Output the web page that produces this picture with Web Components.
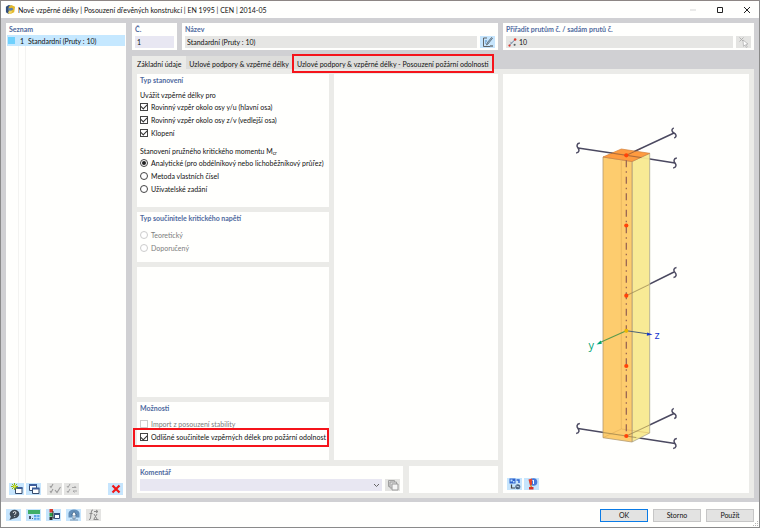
<!DOCTYPE html>
<html lang="cs">
<head>
<meta charset="utf-8">
<title>Nové vzpěrné délky</title>
<style>
html, body { height: 100%; }
body { margin: 0; background: #fff; font: 7px/10px Lato, "Open Sans", sans-serif; color: #111; }
</style>
</head>
<body>
<length-dialog></length-dialog>

<script>
const ICONS = {
  app: '<path d="M1 3 4 1l3 1v6L4 11 1 9z" fill="#33507c"/><path d="M4 3 7 1l4 2-1 6-4 2-2-2z" fill="#e3b92c"/><path d="M3 5l5-1 1 2-4 2z" fill="#5a7fae"/><path d="M5 7l3 1-2 3-3-1z" fill="#f0d560"/>',
  edit: '<path d="M5 2H1.500v8.500H8" fill="none" stroke="#555" stroke-width=".9"/><path d="M3 5h2M3 7h1" stroke="#4a86c0"/><path d="M4.500 9 5 7l4.500-5.500 1 .8L6 8z" fill="#8fb7d6" stroke="#444" stroke-width=".6"/><path d="M8 10h3" stroke="#444"/>',
  member: '<path d="M2 9.500 9 2.500" stroke="#5a7fa8" stroke-width="1.300"/><path d="M3 5l2 2M7 9l2 1" stroke="#778"/><circle cx="2" cy="10" r="1.500" fill="#e03a2f"/><circle cx="9.500" cy="2" r="1.700" fill="#e03a2f"/><circle cx="9" cy="9" r="1.200" fill="#566"/>',
  pick: '<path d="M1.500 1.500l4 4M5.500 1.500l-4 4" stroke="#aaa" stroke-width=".9"/><path d="M5 4l5 4-2.200.3L9.300 11l-1 .5L7 9 5.500 10.300z" fill="#fff" stroke="#aaa" stroke-width=".7"/>',
  create: '<path d="M4.500 4.500h6.500v6H4.500z" fill="#fff" stroke="#344a6c"/><path d="M4 4h7.500v2H4z" fill="#3d5f9c"/><path d="M3.500 0v7M0 3.500h7M1 1l5 5M6 1 1 6" stroke="#93bb0c" stroke-width="1"/><circle cx="3.500" cy="3.500" r="1.200" fill="#e5e94a"/>',
  copyWin: '<path d="M1.500 1.500h7v6h-7z" fill="#fff" stroke="#344a6c"/><path d="M1 1h8v2H1z" fill="#3d5f9c"/><path d="M4.500 5.500h6.500v5H4.500z" fill="#fff" stroke="#344a6c"/><path d="M4 4.500h7.500v2H4z" fill="#3d5f9c"/>',
  checkAll: '<path d="M1 3l1 1.500L4 1M1 8l1 1.500L4 6M6 7l2 2.500L11.500 4" fill="none" stroke="#9b9b9b" stroke-width="1.100"/>',
  checkSwap: '<path d="M1 3l1 1.500L4 1M1 8l1 1.500L4 6M6 4.500h4L8.500 3M11 8H7l1.500 1.500" fill="none" stroke="#a3a3a3" stroke-width="1"/>',
  remove: '<path d="M2.500 2.500l7 7M9.500 2.500l-7 7" stroke="#f01818" stroke-width="2.200"/>',
  help: '<ellipse cx="6.500" cy="5" rx="4.800" ry="4.200" fill="#3f4c58"/><path d="M1.500 11l2-5 3.500 3z" fill="#3f4c58"/><path d="M5.200 4q0-1.400 1.400-1.400T8 4q0 .7-1.300 1.300v.6M6.700 7v.8" fill="none" stroke="#fff" stroke-width=".9"/>',
  units: '<path d="M0 1h12v4H0z" fill="#3fae68"/><path d="M1 7h2v3H1zM4 9h1v1H4z" fill="#49566c"/><path d="M6 6h2.500v2H6zM9.200 6h2.300v2H9.200zM6 8.800h2.500v2H6zM9.200 8.800h2.300v2H9.200z" fill="#5ba6e8"/>',
  tree: '<path d="M1.500 0h3.500v3.500H1.500z" fill="#d63a2c"/><path d="M1.500 4h3.500v3.500H1.500z" fill="#2c9d48"/><path d="M1.500 8h3v3h-3z" fill="#2b2b2b"/><path d="M5 2v7h2" stroke="#333" fill="none"/><path d="M6.500 4.500h5v5h-5z" fill="#fff" stroke="#33507c"/><path d="M6 4h6v2H6z" fill="#33507c"/>',
  view: '<path d="M.5 4q1-3.500 5.500-3.500T11.500 4v4.500H8V5H4v3.500H.5z" fill="#638fb9"/><path d="M6 2.500 8.500 6 7 6v4H5V6H3.500z" fill="#fff" stroke="#31587c" stroke-width=".7"/><path d="M2 11h8" stroke="#8199b0"/>',
  formula: '<path d="M5 1Q3.500.5 3.300 3L2.500 9q-.3 2-1.500 1.500M1.500 4.500h3M6 5l3 5M9 5l-3 5M5.500 10.500h5M6 2.500h4M8 1l2 1.500L8 4" fill="none" stroke="#8a8a8a"/>',
  copy: '<path d="M1.500 1.500h6v6h-6z" fill="#d8d8d8" stroke="#a0a0a0"/><path d="M3 3h6.500v6H3z" fill="#ddd" stroke="#a0a0a0"/><path d="M5 5h6v6H5z" fill="#f5f5f5" stroke="#999"/>',
  display: '<path d="M.5.500h6v5h-6z" fill="#2e62cc"/><path d="M1.500 1.500h2v2h-2zM4 3h1.500v1.500H4z" fill="#bfe2ff"/><path d="M2.500 6.500V10H6" fill="none" stroke="#444" stroke-width="1.200"/><path d="M7.500 2H10v3" fill="none" stroke="#2e62cc" stroke-width="1.400"/><circle cx="8.800" cy="8.700" r="2.500" fill="#49627f"/><path d="M7.300 8l3 1" stroke="#c5d8e8"/>',
  balloon: '<circle cx="7.500" cy="4" r="3.800" fill="#4778d8"/><path d="M7.500 2v4M6.500 3l1-1" stroke="#fff" stroke-width="1" fill="none"/><path d="M2.500 1.500 6 .5v6L4 7.500z" fill="#e6452e"/><path d="M3 9h4.500v2.500H3z" fill="#d6332a"/><path d="M4.500 7l1 2" stroke="#d08a2e" stroke-width="1.500"/>',
  min: '<path d="M3 6h6" stroke="#d5d5d5"/>',
  max: '<path d="M3.500 3.500h5v5h-5z" fill="none" stroke="#222"/>',
  close: '<path d="M3 3l6 6M9 3 3 9" stroke="#222" stroke-width="1"/>'
};
const svg = name => `<svg viewBox="0 0 12 12" aria-hidden="true">${ICONS[name]}</svg>`;

function define(name, render) {
  customElements.define(name, class extends HTMLElement {
    connectedCallback() {
      if (this.shadowRoot) return;
      this.attachShadow({ mode: 'open' }).innerHTML = '<style>*{box-sizing:border-box}</style>' + render(this);
    }
  });
}

/* Square tool button; tones: blue, grey, plain. */
define('icon-button', el => `
<style>
  :host { display: block; flex: none; width: 15px; height: 12px; }
  button { display: flex; align-items: center; justify-content: center; width: 100%; height: 100%; padding: 0; border: 0; background: #c6e5fd; }
  :host([tone="grey"]) button { background: #e4e4e2; }
  :host([tone="plain"]) button { background: none; }
  svg { display: block; width: 12px; height: 12px; }
</style>
<button type="button" aria-label="${el.getAttribute('label')}" title="${el.getAttribute('label')}">${svg(el.getAttribute('icon'))}</button>`);

/* White box with an optional blue heading. */
define('group-box', el => `
<style>
  :host { display: flex; flex-direction: column; min-width: 0; background: #fffffd; padding: 1px 3px; }
  h2 { margin: 0; font: inherit; font-weight: 700; color: #4f6a9f; }
</style>
${el.hasAttribute('heading') ? `<h2>${el.getAttribute('heading')}</h2>` : ''}
<slot></slot>`);

/* Labelled text field, with a slot for a button after it. */
define('text-field', el => `
<style>
  :host { display: block; min-width: 0; background: #fffffd; padding: 1px 3px 2px; }
  label { display: block; font-weight: 700; color: #4f6a9f; }
  .row { display: flex; gap: 3px; padding-top: 2px; }
  .box { flex: 1; min-width: 0; display: flex; align-items: center; gap: 2px; height: 12px; padding: 0 2px; background: var(--field, #e6e6e4); }
  svg { flex: none; width: 9px; height: 9px; }
  input { flex: 1; min-width: 0; width: 0; height: 12px; border: 0; padding: 0; background: none; font: inherit; color: inherit; outline: 0; }
</style>
<label for="f">${el.getAttribute('label')}</label>
<div class="row"><div class="box">${el.hasAttribute('icon') ? svg(el.getAttribute('icon')) : ''}<input id="f" value="${el.getAttribute('value')}"></div><slot></slot></div>`);

/* Tick box or radio button with its caption. */
define('choice-item', el => {
  const type = el.getAttribute('type');
  return `
<style>
  :host { display: block; position: relative; }
  label { display: flex; align-items: center; gap: 3px; height: 13px; white-space: nowrap; }
  input { appearance: none; flex: none; width: 8px; height: 8px; margin: 0; border: 1px solid #444; background: #fff; display: grid; place-items: center; }
  input[type=radio] { border-radius: 50%; }
  input[type=radio]:checked::after { content: ""; width: 4px; height: 4px; border-radius: 50%; background: #222; }
  input[type=checkbox]:checked::after { content: ""; width: 5px; height: 3px; border: solid #333; border-width: 0 0 1px 1px; transform: rotate(-45deg); margin-bottom: 1px; }
  :host([off]) label { color: #7c7c7c; }
  :host([off]) input { border-color: #ccc; }
  :host([marked])::after { content: ""; position: absolute; inset: -3px -3px -3px -7px; border: 2px solid #f5141b; pointer-events: none; }
</style>
<label><input type="${type}" name="c" ${el.hasAttribute('on') ? 'checked' : ''} ${el.hasAttribute('off') ? 'disabled' : ''}><span><slot></slot></span></label>`;
});

define('caption-line', () => `
<style>:host { display: block; white-space: nowrap; } </style><slot></slot>`);

define('title-bar', () => `
<style>
  :host { display: flex; align-items: center; height: 18px; flex: none; padding: 0 5px 0 4px; background: #fffffd; border-top: 1px solid #8d8684; }
  .logo svg { display: block; width: 11px; height: 11px; }
  h1 { flex: 1; margin: 0 0 0 2px; font: inherit; white-space: nowrap; }
  .sys { display: flex; gap: 12px; }
</style>
<span class="logo">${svg('app')}</span><h1><slot></slot></h1>
<div class="sys"><icon-button tone="plain" icon="min" label="Minimalizovat"></icon-button><icon-button tone="plain" icon="max" label="Maximalizovat"></icon-button><icon-button tone="plain" icon="close" label="Zavřít"></icon-button></div>`);

define('item-list', () => `
<style>
  :host { display: flex; flex-direction: column; background: #fffffd; padding: 1px 1px 3px; min-width: 0; }
  h2 { margin: 0 0 1px 2px; font: inherit; font-weight: 700; color: #4f6a9f; }
  ul { flex: 1; margin: 0; padding: 0; list-style: none; background: linear-gradient(90deg, transparent 11px, #f3f3f1 11px 12px, transparent 12px 18px, #f3f3f1 18px 19px, transparent 19px); }
  li { display: flex; align-items: center; height: 11px; background: #c5e8ff; }
  i { width: 7px; height: 7px; margin-left: 1px; background: #6fd1fd; }
  b { width: 12px; padding-right: 3px; margin-right: 1px; text-align: right; font-weight: 400; }
  .tools { display: flex; gap: 2px; padding: 0 2px; }
  .tools :nth-child(3) { margin-left: 4px; }
  .tools :last-child { margin-left: auto; }
</style>
<h2>Seznam</h2>
<ul role="listbox" aria-label="Seznam"><li role="option" aria-selected="true"><i></i><b>1</b><span>Standardní (Pruty : 10)</span></li></ul>
<div class="tools"><icon-button icon="create" label="Nový"></icon-button><icon-button icon="copyWin" label="Kopírovat"></icon-button><icon-button tone="grey" icon="checkAll" label="Vybrat vše"></icon-button><icon-button tone="grey" icon="checkSwap" label="Obrátit výběr"></icon-button><icon-button icon="remove" label="Smazat"></icon-button></div>`);

define('tab-strip', () => `
<style>
  nav { display: flex; height: 13px; }
  button { position: relative; border: 0; padding: 2px 3px 0; background: #dddddb; font: inherit; color: inherit; white-space: nowrap; }
  button[aria-selected=true] { background: #ebebe8; padding: 2px 5px 0; }
  button.marked { padding: 2px 5px 0; }
  .marked::after { content: ""; position: absolute; inset: -2px 0 -4px; border: 2px solid #f5141b; }
</style>
<nav role="tablist">
<button role="tab" aria-selected="true">Základní údaje</button><button role="tab" aria-selected="false">Uzlové podpory &amp; vzpěrné délky</button><button role="tab" aria-selected="false" class="marked">Uzlové podpory &amp; vzpěrné délky - Posouzení požární odolnosti</button></nav>`);

define('comment-field', () => `
<style>
  :host { display: block; background: #fffffd; padding: 1px 3px; min-width: 0; }
  label { display: block; font-weight: 700; color: #4f6a9f; padding-bottom: 2px; }
  .row { display: flex; gap: 3px; }
  .box { flex: 1; position: relative; }
  select { appearance: none; display: block; width: 100%; height: 12px; border: 0; border-radius: 0; background: #e8e7f2; font: inherit; }
  svg { position: absolute; right: 2px; top: 3px; width: 7px; height: 7px; pointer-events: none; }
</style>
<label for="c">Komentář</label>
<div class="row"><div class="box"><select id="c"><option></option></select><svg viewBox="0 0 7 7"><path d="M1 2l2.500 2.500L6 2" fill="none" stroke="#666"/></svg></div><icon-button tone="grey" icon="copy" label="Kopírovat komentář"></icon-button></div>`);

/* Isometric column with nodes, supports and local axes. */
define('column-view', () => {
  const squig = (x, y, r) => `<path transform="translate(${x} ${y}) rotate(${r})" d="M1.500-5C-2-4.500-1.500-1.500 0 0S2 4.500-1.500 5"/>`;
  const dots = [155.3, 225.5, 295.7, 366, 436].map(y => `<circle cx="626.300" cy="${y}" r="2.100"/>`).join('');
  return `
<style>
  :host { display: flex; flex-direction: column; background: #fffffd; min-width: 0; padding: 0 4px 3px; }
  .stage { flex: 1; min-height: 0; width: 100%; }
  .tools { display: flex; gap: 2px; }
  text { font: 11px "Open Sans", sans-serif; }
</style>
<svg class="stage" viewBox="507 74 238 404" role="img" aria-label="Prut se vzpěrnými podporami">
  <g fill="none" stroke="#4b4960" stroke-width="1.500">
    <path d="M578 148l48.300 7.300L674 133M626.300 155.300 675 163M626.300 295.700 674 272M578 428.500l48.300 7.500L674 413.500M626.300 436 675 443.500"/>
    ${squig(578, 148, 4)}${squig(674, 133, -20)}${squig(675, 163, 4)}${squig(675, 272.500, 0)}${squig(578, 428.500, 4)}${squig(674, 413.500, -20)}${squig(675, 443.500, 4)}
  </g>
  <path d="M632 161.500 649.700 153.300V433L632 442z" fill="#f8e98f" fill-opacity=".95" stroke="#aaa58e" stroke-width=".8"/>
  <path d="M603 157l29 4.500V442l-29-4.300z" fill="#fdc966" fill-opacity=".95" stroke="#b29a72" stroke-width=".8"/>
  <path d="M603 157 621.300 149l28.400 4.300-17.700 8.200z" fill="#ff9635" fill-opacity=".95" stroke="#d1833e" stroke-width=".7"/>
  <path d="M621.300 161V429M603 437.700l18.300-8.700 28.400 4" fill="none" stroke="#c9974b" stroke-opacity=".5" stroke-width=".7"/>
  <path d="M611 153l15.300 2.300L641 148.600M626.300 155.300l15 2.300" stroke="#6b4a42" stroke-width=".9" fill="none" stroke-opacity=".6"/>
  <path d="M626.300 295.700 649 284.700M603 432.500l23.300 3.500 23-10.800M626.300 436l10 1.600" stroke="#8f7b4c" stroke-width=".8" fill="none" stroke-opacity=".8"/>
  <path d="M626.300 155.300V436" stroke="#925f52" stroke-width="1.200" stroke-dasharray="7 4 1.500 4" stroke-dashoffset="-5"/>
  <path d="M626.300 330.700 600 342.500" stroke="#5b9a4c" stroke-width="1.100"/>
  <path d="M596.500 344.500l4.200-4 1.200 3.200z" fill="#00a573"/>
  <path d="M626.300 330.700 649 334" stroke="#4c6178" stroke-width="1"/>
  <path d="M652.500 334.600l-5.300-2.200-.4 3.400z" fill="#1537cf"/>
  <g fill="#ff430a">${dots}</g>
  <circle cx="626.300" cy="330.700" r="2" fill="#ebb900"/>
  <text x="588.500" y="348.500" fill="#00a573">y</text>
  <text x="654.500" y="339" fill="#1537cf">z</text>
</svg>
<div class="tools"><icon-button icon="display" label="Zobrazení"></icon-button><icon-button icon="balloon" label="Nápověda k obrázku"></icon-button></div>`;
});

define('dialog-footer', () => `
<style>
  :host { position: relative; display: flex; align-items: center; justify-content: space-between; flex: none; height: 26px; padding: 1px 5px 0; background: #fffffd; border-bottom: 1px solid #8a8a8a; }
  div { display: flex; gap: 5px; }
  button { width: 48px; height: 13px; padding: 0; border: 1px solid #c6c6c6; background: #e3e3e2; font: inherit; color: inherit; }
  .ok { border: 1px solid #0a7be6; outline: 0; }
  .grip { position: absolute; right: 0; bottom: 0; width: 6px; height: 6px; }
</style>
<div class="tools"><icon-button icon="help" label="Nápověda"></icon-button><icon-button icon="units" label="Jednotky"></icon-button><icon-button icon="tree" label="Struktura"></icon-button><icon-button icon="view" label="Pohled"></icon-button><icon-button tone="grey" icon="formula" label="Vzorec"></icon-button></div>
<div><button class="ok" type="submit">OK</button><button type="button">Storno</button><button type="button">Použít</button></div>
<svg class="grip" viewBox="0 0 6 6" aria-hidden="true"><path d="M4 0h1v1H4zM2 2h1v1H2zM4 2h1v1H4zM0 4h1v1H0zM2 4h1v1H2zM4 4h1v1H4z" fill="#b5b5b5"/></svg>`);

define('length-dialog', () => `
<style>
  :host { display: flex; flex-direction: column; min-height: 100vh; border: solid #8a8a8a; border-width: 0 1px; }
  main { flex: 1; display: grid; grid-template-columns: 120fr 622fr; gap: 6px; padding: 5px 5px 4px; background: #d0d0d3; }
  .right { display: flex; flex-direction: column; min-width: 0; }
  .top { display: grid; grid-template-columns: 45fr 316fr 251fr; gap: 5px; margin-bottom: 6px; }
  .page { flex: 1; display: grid; grid-template-columns: 361fr 246fr; gap: 5px; padding: 5px; background: #ebebe8; }
  .left { display: grid; grid-template-rows: 1fr 27px; gap: 6px; min-width: 0; }
  .cols { display: grid; grid-template-columns: 192fr 164fr; gap: 5px; }
  .stack { display: grid; grid-template-rows: 133fr 50fr 129fr 58fr; gap: 5px; }
  .low { display: grid; grid-template-columns: 266fr 89fr; gap: 6px; }
  .s5 { margin-top: 5px; } .s7 { margin-top: 7px; }
  sub { font-size: 5px; line-height: 0; vertical-align: -1px; }
</style>
<title-bar>Nové vzpěrné délky | Posouzení dřevěných konstrukcí | EN 1995 | CEN | 2014-05</title-bar>
<main>
  <item-list></item-list>
  <div class="right">
    <div class="top">
      <text-field label="Č." value="1" style="--field:#e8e7f2"></text-field>
      <text-field label="Název" value="Standardní (Pruty : 10)"><icon-button icon="edit" label="Upravit název"></icon-button></text-field>
      <text-field label="Přiřadit prutům č. / sadám prutů č." value="10" icon="member"><icon-button tone="grey" icon="pick" label="Vybrat pruty"></icon-button></text-field>
    </div>
    <tab-strip></tab-strip>
    <div class="page">
      <div class="left">
        <div class="cols">
          <div class="stack">
            <group-box heading="Typ stanovení">
              <caption-line class="s5">Uvážit vzpěrné délky pro</caption-line>
              <choice-item type="checkbox" on>Rovinný vzpěr okolo osy y/u (hlavní osa)</choice-item>
              <choice-item type="checkbox" on>Rovinný vzpěr okolo osy z/v (vedlejší osa)</choice-item>
              <choice-item type="checkbox" on>Klopení</choice-item>
              <caption-line class="s7">Stanovení pružného kritického momentu M<sub>cr</sub></caption-line>
              <choice-item type="radio" on>Analytické (pro obdélníkový nebo lichoběžníkový průřez)</choice-item>
              <choice-item type="radio">Metoda vlastních čísel</choice-item>
              <choice-item type="radio">Uživatelské zadání</choice-item>
            </group-box>
            <group-box heading="Typ součinitele kritického napětí">
              <choice-item class="s5" type="radio" off>Teoretický</choice-item>
              <choice-item type="radio" off>Doporučený</choice-item>
            </group-box>
            <group-box></group-box>
            <group-box heading="Možnosti">
              <choice-item class="s5" type="checkbox" off>Import z posouzení stability</choice-item>
              <choice-item type="checkbox" on marked>Odlišné součinitele vzpěrných délek pro požární odolnost</choice-item>
            </group-box>
          </div>
          <group-box></group-box>
        </div>
        <div class="low"><comment-field></comment-field><group-box></group-box></div>
      </div>
      <column-view></column-view>
    </div>
  </div>
</main>
<dialog-footer></dialog-footer>`);
</script>
</body>
</html>
